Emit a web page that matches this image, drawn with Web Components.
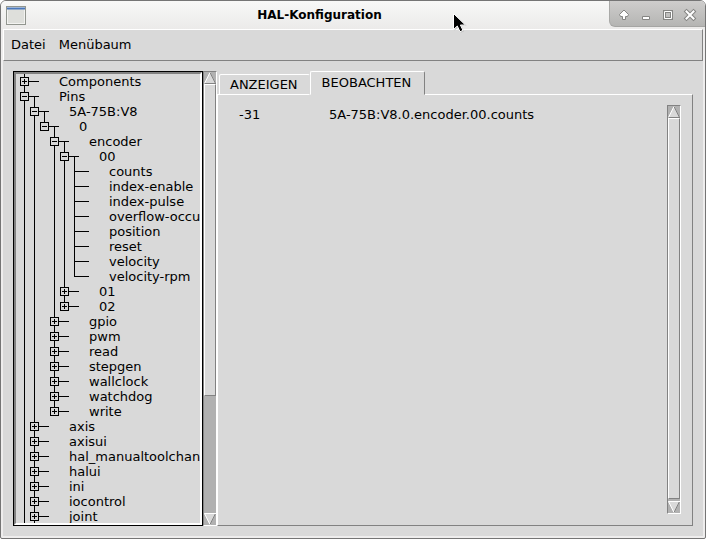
<!DOCTYPE html>
<html lang="de">
<head>
<meta charset="utf-8">
<title>HAL-Konfiguration</title>
<style>
  body {
    margin: 0;
    background: #fff;
  }
</style>
</head>
<body>
<hal-window heading="HAL-Konfiguration">
  <hal-menubar slot="menu">
    <hal-menu-button>Datei</hal-menu-button>
    <hal-menu-button>Menübaum</hal-menu-button>
  </hal-menubar>

  <hal-tree>
    <hal-node label="Components"></hal-node>
    <hal-node label="Pins" open more>
      <hal-node label="5A-75B:V8" open>
        <hal-node label="0" open>
          <hal-node label="encoder" open>
            <hal-node label="00" open>
              <hal-node label="counts" leaf></hal-node>
              <hal-node label="index-enable" leaf></hal-node>
              <hal-node label="index-pulse" leaf></hal-node>
              <hal-node label="overflow-occurred" leaf></hal-node>
              <hal-node label="position" leaf></hal-node>
              <hal-node label="reset" leaf></hal-node>
              <hal-node label="velocity" leaf></hal-node>
              <hal-node label="velocity-rpm" leaf></hal-node>
            </hal-node>
            <hal-node label="01"></hal-node>
            <hal-node label="02"></hal-node>
          </hal-node>
          <hal-node label="gpio"></hal-node>
          <hal-node label="pwm"></hal-node>
          <hal-node label="read"></hal-node>
          <hal-node label="stepgen"></hal-node>
          <hal-node label="wallclock"></hal-node>
          <hal-node label="watchdog"></hal-node>
          <hal-node label="write"></hal-node>
        </hal-node>
      </hal-node>
      <hal-node label="axis"></hal-node>
      <hal-node label="axisui"></hal-node>
      <hal-node label="hal_manualtoolchange"></hal-node>
      <hal-node label="halui"></hal-node>
      <hal-node label="ini"></hal-node>
      <hal-node label="iocontrol"></hal-node>
      <hal-node label="joint" more></hal-node>
    </hal-node>
  </hal-tree>

  <hal-notebook>
    <hal-tab slot="tabs">ANZEIGEN</hal-tab>
    <hal-tab slot="tabs" selected>BEOBACHTEN</hal-tab>
    <hal-watch value="-31" name="5A-75B:V8.0.encoder.00.counts"></hal-watch>
  </hal-notebook>
</hal-window>

<script>
const templates = {
  window(heading) {
    return `
    <style>
      *, ::before, ::after {
        box-sizing: border-box;
      }

      :host {
        --face: #d9d9d9;
        --light: #ffffff;
        --dark: #828282;
        --trough: #b1b1b1;
        display: flex;
        flex-direction: column;
        box-sizing: border-box;
        height: 100vh;
        overflow: hidden;
        border: 1px solid #757575;
        border-radius: 6px 6px 2px 2px;
        background: #eeeded;
        color: #000;
        font-family: "DejaVu Sans", sans-serif;
        font-size: 13px;
        line-height: 15px;
      }

      header {
        display: flex;
        flex: none;
        height: 28px;
        background: linear-gradient(#f8f8f7, #ebeae9);
      }

      .icon {
        flex: none;
        margin: 5px 0 0 5px;
      }

      h1 {
        flex: 1;
        margin: 0;
        padding-left: 4px;
        font-size: 12px;
        font-weight: 700;
        line-height: 28px;
        text-align: center;
      }

      .controls {
        display: flex;
        flex: none;
        align-items: center;
        gap: 6px;
        height: 26px;
        padding: 2px 7px 0 6px;
        border-left: 1px solid #a9a9a7;
        border-bottom: 1px solid #a5a5a3;
        border-bottom-left-radius: 6px;
        background: linear-gradient(#cecdcc, #b5b5b3);
      }

      .controls button {
        display: flex;
        width: 16px;
        height: 16px;
        padding: 0;
        border: 0;
        background: none;
      }

      .client {
        display: flex;
        flex: 1;
        flex-direction: column;
        min-height: 0;
        margin: 0 2px 2px;
        background: var(--face);
      }

      main {
        display: flex;
        flex: 1;
        min-height: 0;
        padding: 10px;
      }

      .pointer {
        position: absolute;
        left: 452px;
        top: 12px;
      }
    </style>
    <header>
      <svg class="icon" width="20" height="19" viewBox="0 0 20 19" aria-hidden="true">
        <rect x=".5" y=".5" width="19" height="18" fill="#dedfdb" stroke="#92968f"/>
        <rect x="1.500" y="1.500" width="17" height="16" fill="none" stroke="#f3f3f1"/>
        <path d="M1 1.500h18v2H1z" fill="#4a78bc"/>
      </svg>
      <h1>${heading}</h1>
      <div class="controls">
        <button type="button" aria-label="Einrollen">
          <svg width="16" height="16"><path d="M8 3 12.500 7.500 11.500 9.500H9.500V12.500H6.500V9.500H4.500L3.500 7.500z" fill="#fff" stroke="#858583"/></svg>
        </button>
        <button type="button" aria-label="Minimieren">
          <svg width="16" height="16"><path d="M4.500 9.500h7v3h-7z" fill="#fff" stroke="#858583"/></svg>
        </button>
        <button type="button" aria-label="Maximieren">
          <svg width="16" height="16"><path d="M4.500 4.500h7v7h-7z" fill="none" stroke="#858583" stroke-width="3"/><path d="M4.500 4.500h7v7h-7z" fill="none" stroke="#fff"/></svg>
        </button>
        <button type="button" aria-label="Schließen">
          <svg width="16" height="16"><path d="m4.500 4.500 7 7m0-7-7 7" stroke="#858583" stroke-width="4" stroke-linecap="square"/><path d="m4.500 4.500 7 7m0-7-7 7" stroke="#fff" stroke-width="2" stroke-linecap="square"/></svg>
        </button>
      </div>
    </header>
    <div class="client">
      <slot name="menu"></slot>
      <main><slot></slot></main>
    </div>
    <svg class="pointer" width="17" height="23" viewBox="0 0 17 23" aria-hidden="true">
      <path d="M2.500 2.500v16l4-3.500 2.500 5.500 3-1.300-2.400-5.300h5z" fill="#999" opacity=".5"/>
      <path d="M1.500 1.500v16l3.800-3.500 2.700 5.700 3-1.300-2.600-5.400h5z" fill="#000" stroke="#fff"/>
    </svg>
    `;
  },

  menubar() {
    return `
    <style>
      :host {
        display: flex;
        flex: none;
        gap: 13px;
        box-sizing: border-box;
        height: 32px;
        padding: 0 7px;
        border: 1px solid;
        border-color: var(--light) var(--dark) var(--dark) var(--light);
      }
    </style>
    <slot></slot>
    `;
  },

  menuButton() {
    return `
    <style>
      :host {
        display: flex;
      }

      button {
        padding: 0 0 2px;
        border: 0;
        background: none;
        color: inherit;
        font: inherit;
      }
    </style>
    <button type="button"><slot></slot></button>
    `;
  },

  tree() {
    return `
    <style>
      :host {
        display: flex;
        flex: 0 0 30%;
        min-width: 0;
        min-height: 0;
      }

      .view {
        flex: 1;
        min-width: 0;
        overflow: hidden;
        border: 2px solid;
        border-color: var(--dark) var(--light) var(--light) var(--dark);
        outline: 1px solid #000;
        margin: 1px;
      }
    </style>
    <div class="view" role="tree"><slot></slot></div>
    <hal-scrollbar style="--start: 0; --size: 311; --rest: 117"></hal-scrollbar>
    `;
  },

  node(label, leaf, open) {
    const toggle = leaf
      ? ""
      : `<button type="button" aria-label="${label}" aria-expanded="${open}"></button>`;
    return `
    <style>
      :host {
        --ink: linear-gradient(#000, #000);
        display: block;
        background: var(--ink) 8px 0 / 1px 100% no-repeat;
      }

      :host(:last-child:not([more])) {
        background-size: 1px 8px;
      }

      .row {
        display: flex;
        align-items: center;
        height: 15px;
        padding-left: 4px;
        background: var(--ink) 8px 7px / 15px 1px no-repeat;
        white-space: nowrap;
      }

      :host([open]) .row {
        background:
          var(--ink) 8px 7px / 15px 1px no-repeat,
          var(--ink) 18px 7px / 1px 8px no-repeat;
      }

      button {
        flex: none;
        box-sizing: border-box;
        width: 9px;
        height: 9px;
        margin-right: -9px;
        padding: 0;
        border: 1px solid #000;
        border-radius: 0;
        background:
          var(--ink) center / 5px 1px no-repeat,
          var(--ink) center / 1px 5px no-repeat,
          var(--face);
      }

      :host([open]) button {
        background:
          var(--ink) center / 5px 1px no-repeat,
          var(--face);
      }

      .label {
        padding-left: 39px;
      }

      .children {
        padding-left: 10px;
      }
    </style>
    <div class="row" role="treeitem">${toggle}<span class="label">${label}</span></div>
    <div class="children" role="group"><slot></slot></div>
    `;
  },

  scrollbar() {
    return `
    <style>
      :host {
        display: flex;
        flex: none;
        flex-direction: column;
        box-sizing: border-box;
        width: 14px;
        border: 1px solid;
        border-color: var(--dark) var(--light) var(--light) var(--dark);
        background: var(--trough);
      }

      button {
        display: flex;
        flex: none;
        width: 12px;
        height: 12px;
        padding: 0;
        border: 0;
        background: none;
      }

      .before {
        flex: var(--start) 0 0;
      }

      .slider {
        flex: var(--size) 0 0;
        box-sizing: border-box;
        border: 1px solid;
        border-color: var(--light) var(--dark) var(--dark) var(--light);
        background: var(--face);
      }

      .after {
        flex: var(--rest) 0 0;
      }
    </style>
    <button type="button" aria-label="Nach oben">
      <svg width="12" height="12"><path d="M6 0 12 12H0z" fill="#d9d9d9"/><path d="M0 11.500h12M6 .5l5.500 11" fill="none" stroke="#828282"/><path d="M.5 11.500 6 .5" stroke="#fff"/></svg>
    </button>
    <div class="before"></div>
    <div class="slider"></div>
    <div class="after"></div>
    <button type="button" aria-label="Nach unten">
      <svg width="12" height="12"><path d="M0 0h12L6 12z" fill="#d9d9d9"/><path d="M11.500.5 6 11.500" stroke="#828282"/><path d="M12 .5H.5l5.500 11" fill="none" stroke="#fff"/></svg>
    </button>
    `;
  },

  notebook() {
    return `
    <style>
      :host {
        display: flex;
        flex: 1;
        flex-direction: column;
        min-width: 0;
      }

      .tabs {
        display: flex;
        flex: none;
        align-items: flex-end;
        height: 24px;
        margin-bottom: -1px;
        padding-left: 2px;
        z-index: 1;
      }

      .page {
        display: flex;
        flex: 1;
        justify-content: space-between;
        min-height: 0;
        padding: 10px 11px 11px 21px;
        border: 1px solid;
        border-color: var(--light) var(--dark) var(--dark) var(--light);
      }
    </style>
    <div class="tabs" role="tablist"><slot name="tabs"></slot></div>
    <div class="page" role="tabpanel">
      <slot></slot>
      <hal-scrollbar style="--start: 0; --size: 381; --rest: 2"></hal-scrollbar>
    </div>
    `;
  },

  tab(selected) {
    return `
    <style>
      :host {
        display: flex;
      }

      button {
        height: 21px;
        padding: 0 11px 1px 10px;
        border: 1px solid;
        border-color: var(--light) transparent var(--light) var(--light);
        border-radius: 2px 2px 0 0;
        background: var(--face);
        color: inherit;
        font: inherit;
      }

      :host([selected]) button {
        height: 24px;
        padding: 0 13px 2px 11px;
        border-right-color: var(--dark);
        border-bottom-color: var(--face);
      }
    </style>
    <button type="button" role="tab" aria-selected="${selected}"><slot></slot></button>
    `;
  },

  watch(value, name) {
    return `
    <style>
      :host {
        display: grid;
        grid-template-columns: 90px auto;
        align-content: start;
        padding-top: 2px;
      }
    </style>
    <span>${value}</span>
    <span>${name}</span>
    `;
  },
};

class HalElement extends HTMLElement {
  constructor() {
    super();
    this.attachShadow({ mode: "open" });
  }

  connectedCallback() {
    const fragment = document
      .createRange()
      .createContextualFragment(this.render());

    this.shadowRoot.replaceChildren(fragment);
  }
}

class HalWindow extends HalElement {
  render() {
    return templates.window(this.getAttribute("heading"));
  }
}

class HalMenubar extends HalElement {
  render() {
    return templates.menubar();
  }
}

class HalMenuButton extends HalElement {
  render() {
    return templates.menuButton();
  }
}

class HalScrollbar extends HalElement {
  render() {
    return templates.scrollbar();
  }
}

class HalTree extends HalElement {
  render() {
    return templates.tree();
  }
}

class HalNode extends HalElement {
  render() {
    return templates.node(
      this.getAttribute("label"),
      this.hasAttribute("leaf"),
      this.hasAttribute("open")
    );
  }
}

class HalNotebook extends HalElement {
  render() {
    return templates.notebook();
  }
}

class HalTab extends HalElement {
  render() {
    return templates.tab(this.hasAttribute("selected"));
  }
}

class HalWatch extends HalElement {
  render() {
    return templates.watch(this.getAttribute("value"), this.getAttribute("name"));
  }
}

// Define the new web components
customElements.define("hal-window", HalWindow);
customElements.define("hal-menubar", HalMenubar);
customElements.define("hal-menu-button", HalMenuButton);
customElements.define("hal-scrollbar", HalScrollbar);
customElements.define("hal-tree", HalTree);
customElements.define("hal-node", HalNode);
customElements.define("hal-notebook", HalNotebook);
customElements.define("hal-tab", HalTab);
customElements.define("hal-watch", HalWatch);
</script>
</body>
</html>
